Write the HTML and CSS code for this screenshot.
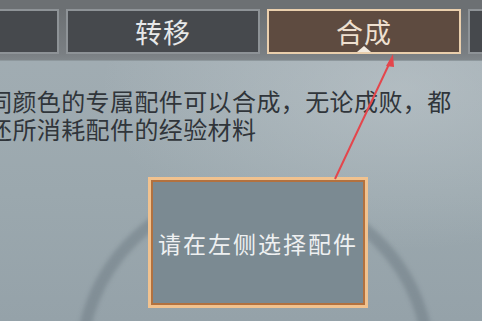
FILE: index.html
```
<!DOCTYPE html>
<html lang="zh">
<head>
<meta charset="utf-8">
<link rel="stylesheet" href="styles.css">
</head>
<body>
<div class="screen">
  <div class="ring"></div>
  <div class="tabbar">
    <div class="tab"></div>
    <div class="tab"><span class="label">转移</span></div>
    <div class="tab active"><span class="label">合成</span><span class="caret"></span></div>
    <div class="tab"></div>
  </div>
  <div class="desc">
    <p>同颜色的专属配件可以合成，无论成败，都</p>
    <p>还所消耗配件的经验材料</p>
  </div>
  <div class="slot">请在左侧选择配件</div>
  <svg class="annot" width="482" height="321" viewBox="0 0 482 321">
    <line x1="391" y1="60" x2="335" y2="179" stroke="#e4464c" stroke-width="2"/>
    <polygon points="393,54 386,66 394,67" fill="#e4464c"/>
  </svg>
</div>
</body>
</html>
```
FILE: styles.css
```
html, body {
  margin: 0;
  padding: 0;
}
body {
  width: 482px;
  height: 321px;
  overflow: hidden;
  font-family: "Noto Sans CJK SC", "Noto Sans", sans-serif;
}
.screen {
  position: relative;
  width: 482px;
  height: 321px;
  overflow: hidden;
  background:
    radial-gradient(ellipse 300px 160px at 400px 90px, rgba(200,208,212,0.45), rgba(200,208,212,0) 100%),
    linear-gradient(180deg, #a3aeb4 0%, #9ba8ae 60%, #95a2a9 100%);
}
.ring {
  position: absolute;
  left: 75px;
  top: 184px;
  width: 336px;
  height: 336px;
  border-radius: 50%;
  border: 12px solid rgba(105, 118, 126, 0.45);
  filter: blur(2px);
}
.tabbar {
  position: relative;
  height: 45px;
  padding: 9px 0 6px 0;
  display: flex;
  gap: 7px;
  margin-left: -135px;
  width: 760px;
  background: linear-gradient(180deg, #6c7073 0px, #6c7073 9px, #7a7f83 54px, #80868a 60px);
  border-bottom: 1px solid #8e989d;
}
.tab {
  position: relative;
  flex: 0 0 194px;
  box-sizing: border-box;
  height: 45px;
  border: 2px solid #8e9397;
  background: #46494d;
  display: flex;
  align-items: center;
  justify-content: center;
}
.tab .label {
  font-size: 27px;
  line-height: 1;
  color: #e6e8e9;
  letter-spacing: 1px;
}
.tab.active {
  background: #5e4b40;
  border-color: #eacfad;
}
.tab.active .label {
  color: #eee0d0;
}
.caret {
  position: absolute;
  left: 50%;
  bottom: 0;
  margin-left: -7px;
  width: 0;
  height: 0;
  border-left: 7px solid transparent;
  border-right: 7px solid transparent;
  border-bottom: 6px solid #f3ebe0;
}
.desc {
  position: relative;
  margin: 0 0 0 -12px;
  padding-top: 26px;
}
.desc p {
  margin: 0;
  font-size: 24px;
  line-height: 28px;
  letter-spacing: 0.4px;
  color: #30353a;
  white-space: nowrap;
}
.slot {
  position: relative;
  margin: 34px 0 0 148px;
  width: 220px;
  height: 131px;
  box-sizing: border-box;
  border: 3px solid #f1c28f;
  box-shadow: inset 0 0 0 2px #b2713f;
  background: #7b8a92;
  color: #eef0f1;
  font-size: 23px;
  letter-spacing: 2px;
  display: flex;
  align-items: center;
  justify-content: center;
}
.annot {
  position: absolute;
  left: 0;
  top: 0;
  pointer-events: none;
}
```
